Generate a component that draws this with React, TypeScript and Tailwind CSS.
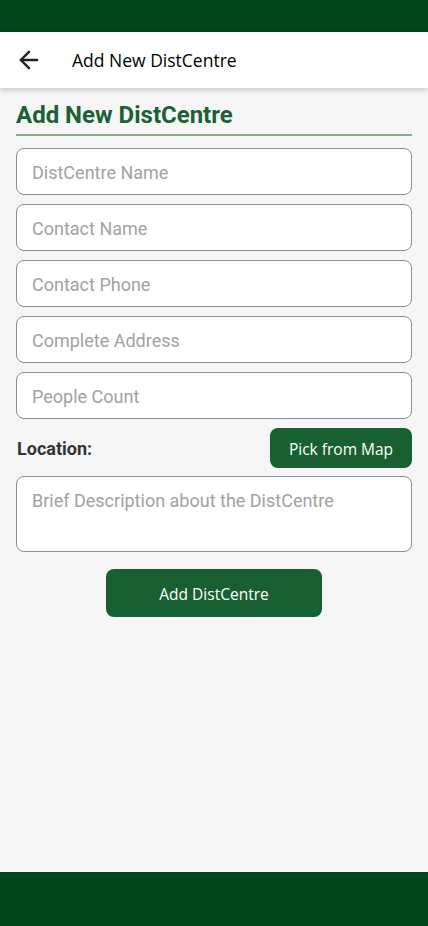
import React from "react";
import { ArrowLeft } from "lucide-react";

const fields = [
  "DistCentre Name",
  "Contact Name",
  "Contact Phone",
  "Complete Address",
  "People Count",
];

const roboto = { fontFamily: "Roboto, 'Noto Sans', sans-serif" };

export default function App() {
  return (
    <div className="min-h-[926px] flex flex-col bg-[#f6f6f6]">
      {/* status strip */}
      <div className="h-8 bg-[#00451c]" />

      <header className="h-14 bg-white flex items-center px-4 shadow-[0_2px_6px_rgba(0,0,0,0.2)] relative z-10">
        <ArrowLeft size={28} strokeWidth={2.1} className="text-[#222] -ml-[1px]" />
        <span className="ml-[29px] text-[17.5px] text-black font-['Open_Sans',sans-serif]">
          Add New DistCentre
        </span>
      </header>

      <main className="flex-1 px-4 pt-[13px]" style={roboto}>
        <h2 className="text-[24px] leading-7 font-bold text-[#1a6136] pb-[5px] border-b-2 border-[#82ae8e]">
          Add New DistCentre
        </h2>

        <div className="flex flex-col gap-[9px] mt-3">
          {fields.map((f) => (
            <input
              key={f}
              placeholder={f}
              className="h-[47px] w-full rounded-lg border border-[#8e8e8e] bg-white px-[15px] pt-[2px] text-[18px] placeholder:text-[#a2a2a2] outline-none"
              style={roboto}
            />
          ))}
        </div>

        <div className="mt-[9px] h-10 flex items-center justify-between">
          <span className="pl-[1px] text-[18px] font-bold text-[#333]">Location:</span>
          <button className="w-[142px] h-10 pt-1 rounded-lg bg-[#185f32] text-white text-[15.5px] font-['Open_Sans',sans-serif]">
            Pick from Map
          </button>
        </div>

        <textarea
          placeholder="Brief Description about the DistCentre"
          className="mt-2 block w-full h-[76px] resize-none rounded-lg border border-[#8e8e8e] bg-white px-[15px] pt-[10px] text-[18px] placeholder:text-[#a2a2a2] outline-none"
          style={roboto}
        />

        <div className="flex justify-center mt-[17px]">
          <button className="w-[216px] h-12 pt-1 rounded-lg bg-[#185f32] text-white text-[15.5px] font-['Open_Sans',sans-serif]">
            Add DistCentre
          </button>
        </div>
      </main>

      <div className="h-[54px] bg-[#00451c]" />
    </div>
  );
}
